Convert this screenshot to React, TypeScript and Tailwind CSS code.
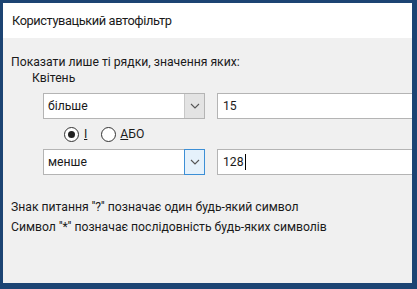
import React from "react";

const font = { fontFamily: 'Roboto, "Noto Sans", sans-serif' };

function Chevron() {
  return (
    <svg width="10" height="6" viewBox="0 0 10 6" fill="none">
      <path d="M1 1 L5 5 L9 1" stroke="#555" strokeWidth="1.1" />
    </svg>
  );
}

function Combo({ value, focused }: { value: string; focused?: boolean }) {
  return (
    <div className="flex h-[26px] w-[162px] shrink-0 border border-[#b4b4b4] bg-white">
      <div className="flex flex-1 items-center pl-[4px] text-[12.2px] text-[#1a1a1a]">{value}</div>
      {focused ? (
        <div className="-my-px -mr-px flex w-[21px] items-center justify-center border border-[#3c8fd6] bg-[#e5f1fb]">
          <Chevron />
        </div>
      ) : (
        <div className="flex w-[20px] items-center justify-center border-l border-[#c8c8c8] bg-[#e3e3e3]">
          <Chevron />
        </div>
      )}
    </div>
  );
}

function Input({ value, caret }: { value: string; caret?: boolean }) {
  return (
    <div className="flex h-[26px] w-[210px] shrink-0 items-center border border-[#b4b4b4] bg-white pl-[5px] text-[12.2px] text-[#1a1a1a]">
      {value}
      {caret && <span className="ml-px inline-block h-[16px] w-px bg-black" />}
    </div>
  );
}

export default function App() {
  return (
    <div className="h-[289px] w-[417px] overflow-hidden bg-[#1c4473] pl-[3px] pr-[5px] pt-[3px] pb-[6px]" style={font}>
      <div className="flex h-full flex-col overflow-hidden bg-[#f0f0f0]">
        <div className="flex h-[35px] shrink-0 items-center bg-white pl-[9px] text-[12.8px] tracking-[-0.4px] text-[#1a1a1a]">
          Користувацький автофільтр
        </div>
        <div className="flex flex-col pl-[8px] pt-[16px] text-[12.2px] text-[#1a1a1a]">
          <div className="leading-[16px]">Показати лише ті рядки, значення яких:</div>
          <div className="ml-[21px] flex items-center leading-[16px]">
            <span>Квітень</span>
          </div>
          <div className="ml-[32px] mt-[7px] flex gap-[12px]">
            <Combo value="більше" />
            <Input value="15" />
          </div>
          <div className="ml-[53px] mt-[2px] flex h-[26px] items-center">
            <div className="flex h-[15px] w-[15px] items-center justify-center rounded-full border border-[#333] bg-white">
              <div className="h-[7px] w-[7px] rounded-full bg-[#222]" />
            </div>
            <span className="ml-[5px] underline">І</span>
            <div className="ml-[14px] h-[15px] w-[15px] rounded-full border border-[#333] bg-white" />
            <span className="ml-[4px]">
              <span className="underline">А</span>БО
            </span>
          </div>
          <div className="ml-[32px] mt-[2px] flex gap-[12px]">
            <Combo value="менше" focused />
            <Input value="128" caret />
          </div>
          <div className="mt-[22px] leading-[20px]">Знак питання ''?'' позначає один будь-який символ</div>
          <div className="leading-[20px]">Символ ''*'' позначає послідовність будь-яких символів</div>
        </div>
      </div>
    </div>
  );
}
